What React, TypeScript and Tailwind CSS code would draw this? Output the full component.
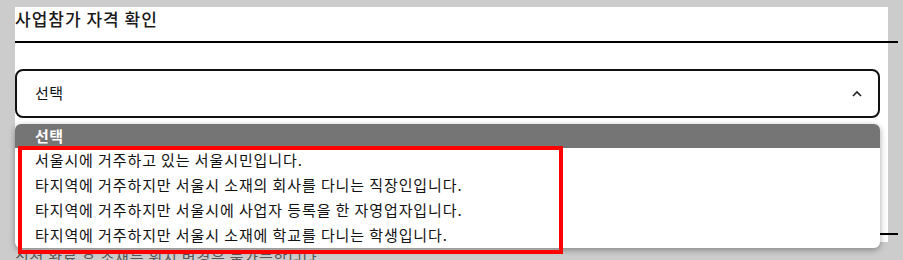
import React from 'react';

const OPTIONS = [
  '서울시에 거주하고 있는 서울시민입니다.',
  '타지역에 거주하지만 서울시 소재의 회사를 다니는 직장인입니다.',
  '타지역에 거주하지만 서울시에 사업자 등록을 한 자영업자입니다.',
  '타지역에 거주하지만 서울시 소재에 학교를 다니는 학생입니다.',
];

const font = { fontFamily: '"Noto Sans CJK KR", "Noto Sans", sans-serif' };

const App: React.FC = () => {
  return (
    <div
      className="relative w-[903px] h-[260px] overflow-hidden bg-[#cccccc] pt-[15px]"
      style={font}
    >
      {/* page panel */}
      <div className="ml-[15px] w-[873px] bg-white pb-[7px]">
        <h2 className="-mt-[8px] h-[24px] text-[17px] leading-[24px] font-medium tracking-[1px] text-[#1a1a1a]">
          사업참가 자격 확인
        </h2>
        <div className="mt-[10px] h-[2px] w-[883px] bg-black" />

        {/* select box */}
        <div className="mt-[26px] flex h-[49px] w-[865px] items-center justify-between rounded-[8px] border-2 border-[#111] pl-[18px] pr-[16px]">
          <span className="text-[15px] tracking-[0.5px] text-[#111]">선택</span>
          <svg width="10" height="7" viewBox="0 0 10 7" fill="none">
            <path d="M1 6 L5 2 L9 6" stroke="#222" strokeWidth="1.6" />
          </svg>
        </div>

        <div className="mt-[115px] h-[2px] w-[883px] bg-black" />
      </div>
      <p className="ml-[15px] mt-[4px] text-[15px] leading-[22px] tracking-[0.8px] text-[#555]">
        신청 완료 후 소재는 위치 변경은 불가능합니다.
      </p>

      {/* open dropdown menu */}
      <div className="absolute left-[15px] top-[124px] w-[865px] overflow-hidden rounded-[6px] bg-white shadow-[0_2px_6px_rgba(0,0,0,0.35)]">
        <div className="flex h-[24px] items-center bg-[#757575] pl-[20px] text-[15px] font-bold tracking-[0.5px] text-white">
          선택
        </div>
        {OPTIONS.map((o) => (
          <div
            key={o}
            className="flex h-[25px] items-center pl-[20px] text-[15px] tracking-[0.9px] text-[#111]"
          >
            {o}
          </div>
        ))}
      </div>

      {/* highlight annotation */}
      <div className="pointer-events-none absolute left-[18px] top-[146px] h-[108px] w-[545px] border-4 border-[#ff0000]" />
    </div>
  );
};

export default App;
